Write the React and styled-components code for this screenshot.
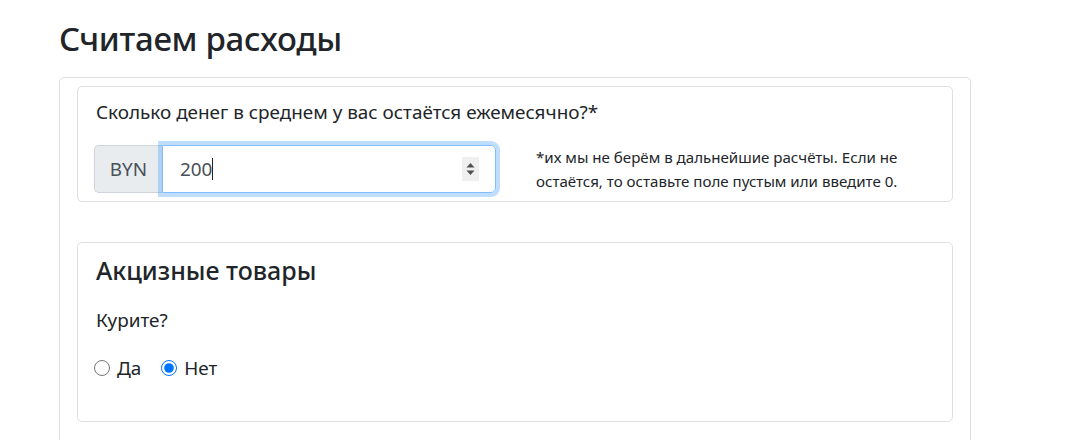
import React from 'react'
import styled, { createGlobalStyle } from 'styled-components'

const GlobalStyle = createGlobalStyle`
  html, body {
    margin: 0;
    padding: 0;
    overflow: hidden;
    background: #fff;
  }
  body {
    font-family: "Noto Sans", "Open Sans", sans-serif;
    color: #212529;
  }
`

const Page = styled.div`
  padding: 19px 0 0 59px;
  width: 912px;
`

const Title = styled.h2`
  margin: 0 0 18px;
  font-size: 33px;
  line-height: 40px;
  font-weight: 500;
  letter-spacing: -0.3px;
`

const OuterCard = styled.div`
  border: 1px solid #dfdfdf;
  border-radius: 5px;
  padding: 8px 17px 40px;
  display: flex;
  flex-direction: column;
  gap: 40px;
`

const Section = styled.div`
  border: 1px solid #dfdfdf;
  border-radius: 5px;
  padding: ${({ $top }) => $top}px 16px ${({ $bottom }) => $bottom}px;
`

const Question = styled.div`
  font-size: 18.9px;
  line-height: 28px;
  margin-bottom: ${({ $gap }) => $gap}px;
  padding-left: 2px;
`

const SectionTitle = styled.h4`
  margin: 0 0 20px;
  font-size: 25px;
  line-height: 31px;
  font-weight: 500;
  padding-left: 2px;
`

const Row = styled.div`
  display: flex;
  align-items: center;
  gap: 40px;
`

const InputGroup = styled.div`
  display: flex;
  width: 402px;
  height: 48px;
`

const Addon = styled.span`
  display: flex;
  align-items: center;
  justify-content: center;
  width: 68px;
  box-sizing: border-box;
  background: #e9ecef;
  border: 1px solid #ced4da;
  border-right: none;
  border-radius: 5px 0 0 5px;
  color: #495057;
  font-size: 18.9px;
`

const Field = styled.div`
  position: relative;
  flex: 1;
  display: flex;
  align-items: center;
  box-sizing: border-box;
  border: 1px solid #80bdff;
  border-radius: 0 5px 5px 0;
  box-shadow: 0 0 0 4px rgba(0, 123, 255, 0.25);
  padding: 0 16px 0 17px;
`

const NumberInput = styled.input`
  border: none;
  outline: none;
  padding: 0;
  width: 3ch;
  font: inherit;
  font-size: 18.9px;
  color: #495057;
  background: transparent;
`

const Caret = styled.span`
  width: 1px;
  height: 22px;
  background: #212529;
`

const Spinner = styled.span`
  position: absolute;
  right: 16px;
  top: 50%;
  transform: translateY(-50%);
  width: 17px;
  height: 24px;
  background: #efefef;
  display: flex;
  align-items: center;
  justify-content: center;
`

const Help = styled.p`
  margin: 0;
  width: 380px;
  font-size: 15.1px;
  line-height: 24px;
  color: #212529;
`

const RadioRow = styled.div`
  display: flex;
  align-items: center;
  gap: 20px;
  font-size: 18.9px;
  line-height: 28px;
`

const RadioLabel = styled.label`
  display: flex;
  align-items: center;
  gap: 7px;
`

const Radio = styled.input`
  margin: 0;
  width: 16px;
  height: 16px;
  accent-color: #0075ff;
`

export default function App() {
  return (
    <>
      <GlobalStyle />
      <Page>
        <Title>Считаем расходы</Title>
        <OuterCard>
          <Section $top={11} $bottom={8}>
            <Question $gap={19}>Сколько денег в среднем у вас остаётся ежемесячно?*</Question>
            <Row>
              <InputGroup>
                <Addon>BYN</Addon>
                <Field>
                  <NumberInput type="text" value="200" readOnly />
                  <Caret />
                  <Spinner>
                    <svg width="9" height="16" viewBox="0 0 9 16">
                      <path d="M4.5 2 L8.5 6.5 H0.5 Z" fill="#505050" />
                      <path d="M4.5 14 L8.5 9.5 H0.5 Z" fill="#505050" />
                    </svg>
                  </Spinner>
                </Field>
              </InputGroup>
              <Help>
                *их мы не берём в дальнейшие расчёты. Если не остаётся, то оставьте поле пустым или введите 0.
              </Help>
            </Row>
          </Section>
          <Section $top={12} $bottom={39}>
            <SectionTitle>Акцизные товары</SectionTitle>
            <Question $gap={20}>Курите?</Question>
            <RadioRow>
              <RadioLabel>
                <Radio type="radio" name="smoke" />
                Да
              </RadioLabel>
              <RadioLabel>
                <Radio type="radio" name="smoke" defaultChecked />
                Нет
              </RadioLabel>
            </RadioRow>
          </Section>
        </OuterCard>
      </Page>
    </>
  )
}
